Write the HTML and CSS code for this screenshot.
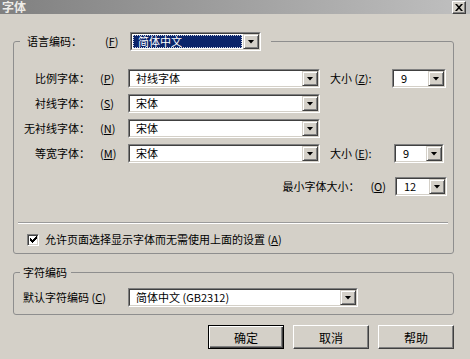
FILE: index.html
```html
<!DOCTYPE html>
<html lang="zh-CN">
<head>
<meta charset="utf-8">
<title>字体</title>
<link rel="stylesheet" href="styles.css">
</head>
<body>
<div class="dialog">
  <div class="titlebar">
    <span class="title">字体</span>
    <span class="close"><svg width="8" height="7" viewBox="0 0 8 7"><path d="M0 0h2l2 2.3 2-2.3h2L5 3.5 8 7H6L4 4.7 2 7H0l3-3.5z" fill="#000"/></svg></span>
  </div>
  <div class="content">
    <fieldset class="group group-fonts">
      <legend class="legend-lang">
        <span class="lang-label">语言编码：</span><span class="mn mn-lang">(<u>F</u>)</span>
        <span class="select w-lang"><span class="select-in"><span class="field hl"><span class="hl-text">简体中文</span></span><span class="arrow"></span></span></span>
      </legend>

      <div class="font-grid">
        <span class="lbl">比例字体：</span><span class="mn">(<u>P</u>)</span>
        <span class="select w-face"><span class="select-in"><span class="field">衬线字体</span><span class="arrow"></span></span></span>
        <span class="size-lbl">大小 (<u>Z</u>):</span>
        <span class="select w-size"><span class="select-in"><span class="field num">9</span><span class="arrow"></span></span></span>

        <span class="lbl">衬线字体：</span><span class="mn">(<u>S</u>)</span>
        <span class="select w-face"><span class="select-in"><span class="field">宋体</span><span class="arrow"></span></span></span>
        <span></span><span></span>

        <span class="lbl">无衬线字体：</span><span class="mn">(<u>N</u>)</span>
        <span class="select w-face"><span class="select-in"><span class="field">宋体</span><span class="arrow"></span></span></span>
        <span></span><span></span>

        <span class="lbl">等宽字体：</span><span class="mn">(<u>M</u>)</span>
        <span class="select w-face"><span class="select-in"><span class="field">宋体</span><span class="arrow"></span></span></span>
        <span class="size-lbl">大小 (<u>E</u>):</span>
        <span class="select w-size narrow"><span class="select-in"><span class="field num">9</span><span class="arrow"></span></span></span>
      </div>

      <div class="min-row">
        <span class="min-lbl">最小字体大小：</span><span class="mn-min">(<u>O</u>)</span>
        <span class="select w-min"><span class="select-in"><span class="field num">12</span><span class="arrow"></span></span></span>
      </div>

      <div class="separator"></div>

      <div class="check-row">
        <span class="checkbox"><svg width="7" height="7" viewBox="0 0 7 7"><path d="M0 2h1v1h1v1h1V3h1V2h1V1h1V0h1v3H6v1H5v1H4v1H3v1H2V6H1V5H0z" fill="#000"/></svg></span>
        <span class="check-text">允许页面选择显示字体而无需使用上面的设置 (<u>A</u>)</span>
      </div>
    </fieldset>

    <fieldset class="group group-enc">
      <legend class="legend-enc">字符编码</legend>
      <div class="enc-row">
        <span class="enc-lbl">默认字符编码 (<u>C</u>)</span>
        <span class="select w-enc"><span class="select-in"><span class="field">简体中文 (GB2312)</span><span class="arrow"></span></span></span>
      </div>
    </fieldset>

    <div class="buttons">
      <span class="btn default">确定</span>
      <span class="btn">取消</span>
      <span class="btn">帮助</span>
    </div>
  </div>
</div>
</body>
</html>
```

FILE: styles.css
```css
html, body {
  margin: 0;
  padding: 0;
  background: #d4d0c8;
}
body {
  font-family: "Noto Sans CJK SC", "Liberation Sans", sans-serif;
  font-size: 11px;
  line-height: 13px;
  color: #000;
}
.dialog {
  width: 470px;
  height: 359px;
  background: #d4d0c8;
  overflow: hidden;
}
.titlebar {
  height: 14px;
  display: flex;
  align-items: center;
  justify-content: space-between;
  background: linear-gradient(to right, #808080, #c0c0c0);
}
.title {
  color: #eeece8;
  font-weight: bold;
  font-size: 12px;
  padding-left: 2px;
  line-height: 14px;
}
.close {
  width: 14px;
  height: 13px;
  box-sizing: border-box;
  margin-right: 4px;
  margin-top: 1px;
  background: #d4d0c8;
  border: 1px solid;
  border-color: #fff #404040 #404040 #fff;
  box-shadow: inset -1px -1px #808080;
  display: flex;
  align-items: center;
  justify-content: center;
}
.content {
  padding: 18px 16px 0 13px;
}
.group {
  margin: 0;
  padding: 0 5px 0 0;
  min-inline-size: 0;
  border: 1px solid #8e8e8e;
  border-radius: 3px;
}
.group-fonts {
  padding-top: 18px;
  padding-bottom: 7px;
}
.legend-lang {
  margin-left: 6px;
  padding: 0 10px 0 7px;
  display: flex;
  align-items: center;
}
.lang-label {
  width: 56px;
}
.mn-lang {
  margin-left: 14px;
  width: 25px;
}
/* select */
.select {
  display: flex;
  height: 19px;
  box-sizing: border-box;
  border: 1px solid;
  border-color: #808080 #fff #fff #808080;
}
.select-in {
  flex: 1;
  display: flex;
  border: 1px solid;
  border-color: #404040 #d4d0c8 #d4d0c8 #404040;
  background: #fff;
  min-width: 0;
}
.field {
  flex: 1;
  padding-left: 6px;
  line-height: 15px;
  white-space: nowrap;
}
.field.num {
  padding-left: 7px;
}
.field.hl {
  padding: 0;
  margin: 1px;
  display: flex;
}
.hl-text {
  flex: 1;
  display: flex;
  align-items: center;
  background: #0a246a;
  color: #fff;
  border: 1px dotted #d0d4e0;
  padding-left: 4px;
}
.arrow {
  width: 16px;
  flex: none;
  box-sizing: border-box;
  background: #d4d0c8;
  border: 1px solid;
  border-color: #d4d0c8 #404040 #404040 #d4d0c8;
  box-shadow: inset 1px 1px #fff, inset -1px -1px #808080;
  display: flex;
  align-items: center;
  justify-content: center;
}
.arrow::before {
  content: "";
  width: 7px;
  height: 4px;
  background: #000;
  clip-path: polygon(0 0, 100% 0, 50% 100%);
}
.w-lang { width: 131px; }
.w-face { width: 192px; }
.w-size { width: 54px; }
.w-size.narrow { width: 50px; margin-left: 2px; }
.w-min { width: 52px; margin-left: 9px; margin-right: 1px; }
.w-enc { width: 230px; }

.font-grid {
  display: grid;
  grid-template-columns: 78px 36px 192px 72px 54px;
  row-gap: 6px;
  align-items: center;
}
.lbl {
  text-align: right;
  padding-right: 2px;
  white-space: nowrap;
}
.mn {
  padding-left: 8px;
}
.size-lbl {
  padding-left: 10px;
  white-space: nowrap;
}
.min-row {
  margin-top: 14px;
  display: flex;
  justify-content: flex-end;
  align-items: center;
}
.mn-min {
  margin-left: 11px;
}
.separator {
  margin: 26px 0 0 4px;
  border-top: 1px solid #9a9a9a;
  border-bottom: 1px solid #fff;
}
.check-row {
  margin-top: 9px;
  padding-left: 13px;
  display: flex;
  align-items: center;
  height: 13px;
}
.checkbox {
  width: 12px;
  height: 12px;
  box-sizing: border-box;
  border: 1px solid;
  border-color: #808080 #fff #fff #808080;
  box-shadow: inset 1px 1px #404040, inset -1px -1px #d4d0c8;
  background: #fff;
  display: flex;
  align-items: center;
  justify-content: center;
}
.check-text {
  margin-left: 6px;
}
.group-enc {
  margin-top: 12px;
  padding-top: 9px;
  padding-bottom: 7px;
}
.legend-enc {
  margin-left: 6px;
  padding: 0 4px 0 3px;
  line-height: 13px;
}
.enc-row {
  display: flex;
  align-items: center;
}
.enc-lbl {
  width: 105px;
  padding-left: 9px;
  white-space: nowrap;
}
.buttons {
  margin-top: 10px;
  display: flex;
  justify-content: flex-end;
  gap: 9px;
}
.btn {
  width: 76px;
  height: 24px;
  box-sizing: border-box;
  background: #d4d0c8;
  border: 1px solid;
  border-color: #fff #404040 #404040 #fff;
  box-shadow: inset -1px -1px #808080;
  display: flex;
  align-items: center;
  justify-content: center;
  font-size: 12px;
}
.btn.default {
  border: 1px solid #000;
  box-shadow: inset 1px 1px #fff, inset -1px -1px #404040, inset -2px -2px #808080;
}
u {
  text-decoration: underline;
  text-underline-offset: 1px;
}
```
